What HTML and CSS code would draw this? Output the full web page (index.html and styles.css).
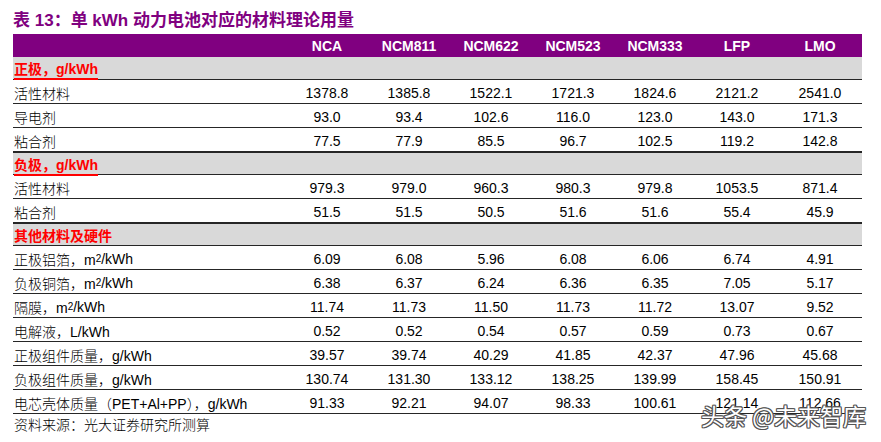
FILE: index.html
```html
<!DOCTYPE html>
<html lang="zh">
<head>
<meta charset="utf-8">
<link rel="stylesheet" href="styles.css">
</head>
<body>
<div class="page">
  <h1 class="title">表 13：单 kWh 动力电池对应的材料理论用量</h1>
  <div class="table">
    <div class="row head">
      <div class="lab"></div><div>NCA</div><div>NCM811</div><div>NCM622</div><div>NCM523</div><div>NCM333</div><div>LFP</div><div>LMO</div>
    </div>
    <div class="row sec"><div class="lab"><span class="ul">正极，g/kWh</span></div></div>
    <div class="row"><div class="lab">活性材料</div><div>1378.8</div><div>1385.8</div><div>1522.1</div><div>1721.3</div><div>1824.6</div><div>2121.2</div><div>2541.0</div></div>
    <div class="row"><div class="lab">导电剂</div><div>93.0</div><div>93.4</div><div>102.6</div><div>116.0</div><div>123.0</div><div>143.0</div><div>171.3</div></div>
    <div class="row"><div class="lab">粘合剂</div><div>77.5</div><div>77.9</div><div>85.5</div><div>96.7</div><div>102.5</div><div>119.2</div><div>142.8</div></div>
    <div class="row sec"><div class="lab"><span class="ul">负极，g/kWh</span></div></div>
    <div class="row"><div class="lab">活性材料</div><div>979.3</div><div>979.0</div><div>960.3</div><div>980.3</div><div>979.8</div><div>1053.5</div><div>871.4</div></div>
    <div class="row"><div class="lab">粘合剂</div><div>51.5</div><div>51.5</div><div>50.5</div><div>51.6</div><div>51.6</div><div>55.4</div><div>45.9</div></div>
    <div class="row sec"><div class="lab">其他材料及硬件</div></div>
    <div class="row"><div class="lab">正极铝箔，m<sup>2</sup>/kWh</div><div>6.09</div><div>6.08</div><div>5.96</div><div>6.08</div><div>6.06</div><div>6.74</div><div>4.91</div></div>
    <div class="row"><div class="lab">负极铜箔，m<sup>2</sup>/kWh</div><div>6.38</div><div>6.37</div><div>6.24</div><div>6.36</div><div>6.35</div><div>7.05</div><div>5.17</div></div>
    <div class="row"><div class="lab">隔膜，m<sup>2</sup>/kWh</div><div>11.74</div><div>11.73</div><div>11.50</div><div>11.73</div><div>11.72</div><div>13.07</div><div>9.52</div></div>
    <div class="row"><div class="lab">电解液，L/kWh</div><div>0.52</div><div>0.52</div><div>0.54</div><div>0.57</div><div>0.59</div><div>0.73</div><div>0.67</div></div>
    <div class="row"><div class="lab">正极组件质量，g/kWh</div><div>39.57</div><div>39.74</div><div>40.29</div><div>41.85</div><div>42.37</div><div>47.96</div><div>45.68</div></div>
    <div class="row"><div class="lab">负极组件质量，g/kWh</div><div>130.74</div><div>131.30</div><div>133.12</div><div>138.25</div><div>139.99</div><div>158.45</div><div>150.91</div></div>
    <div class="row"><div class="lab">电芯壳体质量（PET+Al+PP），g/kWh</div><div>91.33</div><div>92.21</div><div>94.07</div><div>98.33</div><div>100.61</div><div>121.14</div><div>112.66</div></div>
  </div>
  <div class="source">资料来源：光大证券研究所测算</div>
  <div class="watermark">头条 @未来智库</div>
</div>
</body>
</html>
```
FILE: styles.css
```css
html, body {
  margin: 0;
  padding: 0;
  background: #fff;
}
.page {
  position: relative;
  width: 881px;
  height: 442px;
  padding-left: 13px;
  box-sizing: border-box;
  font-family: "Liberation Sans", "Noto Sans CJK SC", sans-serif;
  color: #000;
}
.title {
  margin: 0;
  padding-top: 11px;
  height: 23px;
  line-height: 20px;
  font-size: 17px;
  font-weight: 700;
  color: #800080;
  font-family: "Liberation Sans", "Noto Sans CJK SC", sans-serif;
  white-space: nowrap;
}
.table {
  width: 849px;
}
.row {
  display: grid;
  grid-template-columns: 273px repeat(6, 82px) 84px;
  height: 24px;
  box-sizing: border-box;
  border-bottom: 1px solid #262626;
  font-size: 14px;
}
.row > div {
  display: flex;
  align-items: center;
  justify-content: center;
  padding-top: 2px;
  white-space: nowrap;
}
.row > .lab {
  justify-content: flex-start;
  padding-left: 1px;
  font-weight: 300;
}
.row.head {
  height: 23px;
  background: #800080;
  color: #fff;
  font-weight: 700;
  border-bottom: none;
}
.row.head > div {
  padding-top: 0;
}
.row.sec {
  background: #d9d9d9;
  height: 23px;
  border-top: 1px solid #262626;
}
.row.head + .row.sec {
  border-top: none;
  height: 23px;
}
.row.sec > .lab {
  color: #ff0000;
  font-weight: 700;
  padding-top: 0;
}
.ul {
  border-bottom: 2px solid #ff0000;
  line-height: 18px;
  margin-top: 3px;
}
sup {
  font-size: 10px;
  line-height: 0;
  vertical-align: 6px;
}
.source {
  font-size: 14px;
  font-weight: 300;
  line-height: 20px;
  padding-left: 1px;
  padding-top: 1px;
}
.watermark {
  position: absolute;
  left: 701px;
  top: 402px;
  font-size: 23px;
  line-height: 26px;
  color: #fff;
  white-space: nowrap;
  font-family: "Noto Sans CJK SC", sans-serif;
  text-shadow: 1px 0 0 #555, -1px 0 0 #555, 0 1px 0 #555, 0 -1px 0 #555, 1px 1px 0 #555, -1px -1px 0 #555, 1px -1px 0 #555, -1px 1px 0 #555;
}
```
